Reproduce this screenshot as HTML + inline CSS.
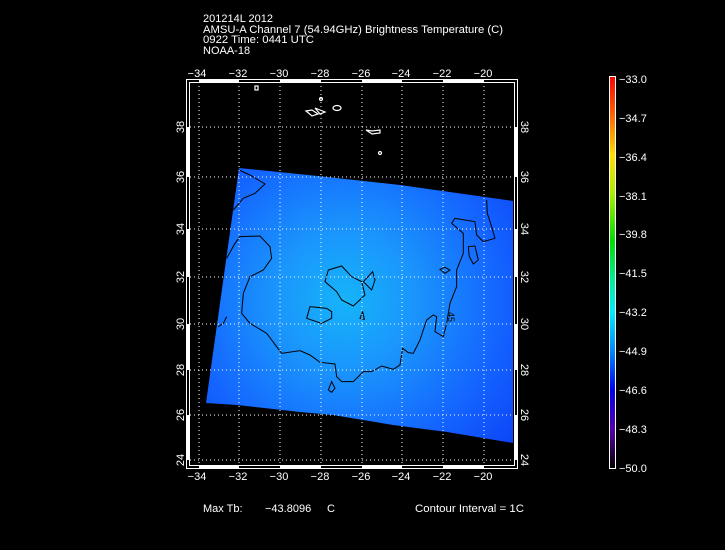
<!DOCTYPE html>
<html><head><meta charset="utf-8"><style>
html,body{margin:0;padding:0;background:#000;width:725px;height:550px;overflow:hidden}
svg{display:block}
text{font-family:"Liberation Sans",sans-serif;fill:#fff;font-size:11px}
</style></head><body>
<svg width="725" height="550" viewBox="0 0 725 550" xmlns="http://www.w3.org/2000/svg">
<defs>
<radialGradient id="g" cx="345" cy="300" r="240" gradientUnits="userSpaceOnUse">
<stop offset="0" stop-color="#16b4fa"/>
<stop offset="0.3" stop-color="#1a94fc"/>
<stop offset="0.65" stop-color="#1464ff"/>
<stop offset="1" stop-color="#0a3cf5"/>
</radialGradient>
<linearGradient id="cb" x1="0" y1="0" x2="0" y2="1">
<stop offset="0" stop-color="#ff0000"/>
<stop offset="0.1" stop-color="#ff6600"/>
<stop offset="0.2" stop-color="#ffdd00"/>
<stop offset="0.3" stop-color="#aaee00"/>
<stop offset="0.42" stop-color="#00dd00"/>
<stop offset="0.52" stop-color="#00ee99"/>
<stop offset="0.6" stop-color="#00eeff"/>
<stop offset="0.7" stop-color="#0088ff"/>
<stop offset="0.8" stop-color="#0000ee"/>
<stop offset="0.9" stop-color="#5500aa"/>
<stop offset="1" stop-color="#000000"/>
</linearGradient>
</defs>

<text x="203" y="22">201214L 2012</text>
<text x="203" y="33" textLength="300" lengthAdjust="spacingAndGlyphs">AMSU-A Channel 7 (54.94GHz) Brightness Temperature (C)</text>
<text x="203" y="43" textLength="111" lengthAdjust="spacingAndGlyphs">0922 Time: 0441 UTC</text>
<text x="203" y="54">NOAA-18</text>

<polygon fill="url(#g)" points="239,168 318,176 400,185 513,201 513,443 447,432 393,425 333,415 300,412 237,405 206,403"/>

<g transform="translate(200,160) scale(0.3333)" fill="none" stroke="#000" stroke-width="3">
<polyline points="117,30 150,45 195,72 165,100 130,115 100,150"/>
<polyline points="80,295 105,250 120,230 180,228 210,260 215,295 190,330 150,350 130,400 125,460 150,490 200,520 230,560 245,580 300,572 330,585 360,607 405,612 410,650 425,665 460,665 490,635 515,635 545,618 580,628 600,615 608,565 625,578 640,580 660,540 680,480 700,465 710,470 705,515 730,530 740,490 750,430 770,380 770,330 790,280 790,220 755,190 765,175 825,185 830,225 850,245 885,235 875,200 862,160 860,120"/>
<polyline points="80,470 70,490 55,500"/>
<polygon points="385,330 425,318 455,350 485,365 495,405 460,438 425,420 410,395 375,365"/>
<polygon points="490,365 518,335 525,360 515,390"/>
<polygon points="330,440 380,445 395,455 395,475 365,490 320,475"/>
<polygon points="480,475 488,455 493,478"/>
<polygon points="805,260 825,258 835,300 820,312 808,290"/>
<polygon points="720,328 735,322 750,330 735,340"/>
<polygon points="385,690 395,665 405,685 395,697"/>
</g>
<text x="0" y="0" transform="translate(448,312) rotate(90)" style="fill:#000;font-size:9px">45</text>

<g fill="none" stroke="#fff" stroke-width="1.2">
<rect x="255" y="86" width="3" height="4"/>
<circle cx="321" cy="99" r="1.5"/>
<path d="M306,111 L312,110 L318,114 L312,116 Z"/>
<path d="M315,108 L325,112 L320,114 Z"/>
<ellipse cx="337" cy="108" rx="4" ry="2.5"/>
<path d="M366,130 L372,131 L380,130 L380,133 L372,134 Z"/>
<circle cx="380" cy="153" r="1.5"/>
</g>

<g stroke="#fff" stroke-width="1" stroke-dasharray="1,3">
<line x1="199" y1="82" x2="199" y2="465"/><line x1="239" y1="82" x2="239" y2="465"/>
<line x1="280" y1="82" x2="280" y2="465"/><line x1="321" y1="82" x2="321" y2="465"/>
<line x1="362" y1="82" x2="362" y2="465"/><line x1="402" y1="82" x2="402" y2="465"/>
<line x1="443" y1="82" x2="443" y2="465"/><line x1="484" y1="82" x2="484" y2="465"/>
<line x1="190" y1="460" x2="515" y2="460"/><line x1="190" y1="415" x2="515" y2="415"/>
<line x1="190" y1="370" x2="515" y2="370"/><line x1="190" y1="324" x2="515" y2="324"/>
<line x1="190" y1="277" x2="515" y2="277"/><line x1="190" y1="229" x2="515" y2="229"/>
<line x1="190" y1="177" x2="515" y2="177"/><line x1="190" y1="127" x2="515" y2="127"/>
</g>

<g fill="none" stroke="#fff" stroke-width="1">
<rect x="186.5" y="79.5" width="331" height="389"/>
<rect x="189.5" y="82.5" width="325" height="383"/>
</g>
<g fill="#fff">
<rect x="187" y="415" width="3" height="45"/><rect x="187" y="324" width="3" height="46"/><rect x="187" y="229" width="3" height="48"/><rect x="187" y="127" width="3" height="50"/>
<rect x="515" y="415" width="3" height="45"/><rect x="515" y="324" width="3" height="46"/><rect x="515" y="229" width="3" height="48"/><rect x="515" y="127" width="3" height="50"/>
<rect x="199" y="466" width="40" height="3"/><rect x="280" y="466" width="41" height="3"/><rect x="362" y="466" width="40" height="3"/><rect x="443" y="466" width="41" height="3"/>
<rect x="199" y="79" width="40" height="3"/><rect x="280" y="79" width="41" height="3"/><rect x="362" y="79" width="40" height="3"/><rect x="443" y="79" width="41" height="3"/>
</g>

<g text-anchor="middle">
<text x="197" y="77">−34</text><text x="238" y="77">−32</text><text x="279" y="77">−30</text><text x="320" y="77">−28</text>
<text x="361" y="77">−26</text><text x="401" y="77">−24</text><text x="442" y="77">−22</text><text x="483" y="77">−20</text>
<text x="197" y="480">−34</text><text x="238" y="480">−32</text><text x="279" y="480">−30</text><text x="320" y="480">−28</text>
<text x="361" y="480">−26</text><text x="401" y="480">−24</text><text x="442" y="480">−22</text><text x="483" y="480">−20</text>
</g>
<g text-anchor="middle">
<text transform="translate(184,460) rotate(-90)">24</text><text transform="translate(184,415) rotate(-90)">26</text>
<text transform="translate(184,370) rotate(-90)">28</text><text transform="translate(184,324) rotate(-90)">30</text>
<text transform="translate(184,277) rotate(-90)">32</text><text transform="translate(184,229) rotate(-90)">34</text>
<text transform="translate(184,177) rotate(-90)">36</text><text transform="translate(184,127) rotate(-90)">38</text>
<text transform="translate(521,460) rotate(90)">24</text><text transform="translate(521,415) rotate(90)">26</text>
<text transform="translate(521,370) rotate(90)">28</text><text transform="translate(521,324) rotate(90)">30</text>
<text transform="translate(521,277) rotate(90)">32</text><text transform="translate(521,229) rotate(90)">34</text>
<text transform="translate(521,177) rotate(90)">36</text><text transform="translate(521,127) rotate(90)">38</text>
</g>

<rect x="609.5" y="76.5" width="6" height="392" fill="url(#cb)" stroke="#fff" stroke-width="1"/>
<g>
<text x="619" y="83">−33.0</text><text x="619" y="122">−34.7</text><text x="619" y="161">−36.4</text>
<text x="619" y="200">−38.1</text><text x="619" y="238">−39.8</text><text x="619" y="277">−41.5</text>
<text x="619" y="316">−43.2</text><text x="619" y="355">−44.9</text><text x="619" y="394">−46.6</text>
<text x="619" y="433">−48.3</text><text x="619" y="472">−50.0</text>
</g>

<text x="203" y="512">Max Tb:</text>
<text x="265" y="512">−43.8096</text>
<text x="327" y="512">C</text>
<text x="415" y="512" textLength="109" lengthAdjust="spacingAndGlyphs">Contour Interval = 1C</text>
</svg>
</body></html>
